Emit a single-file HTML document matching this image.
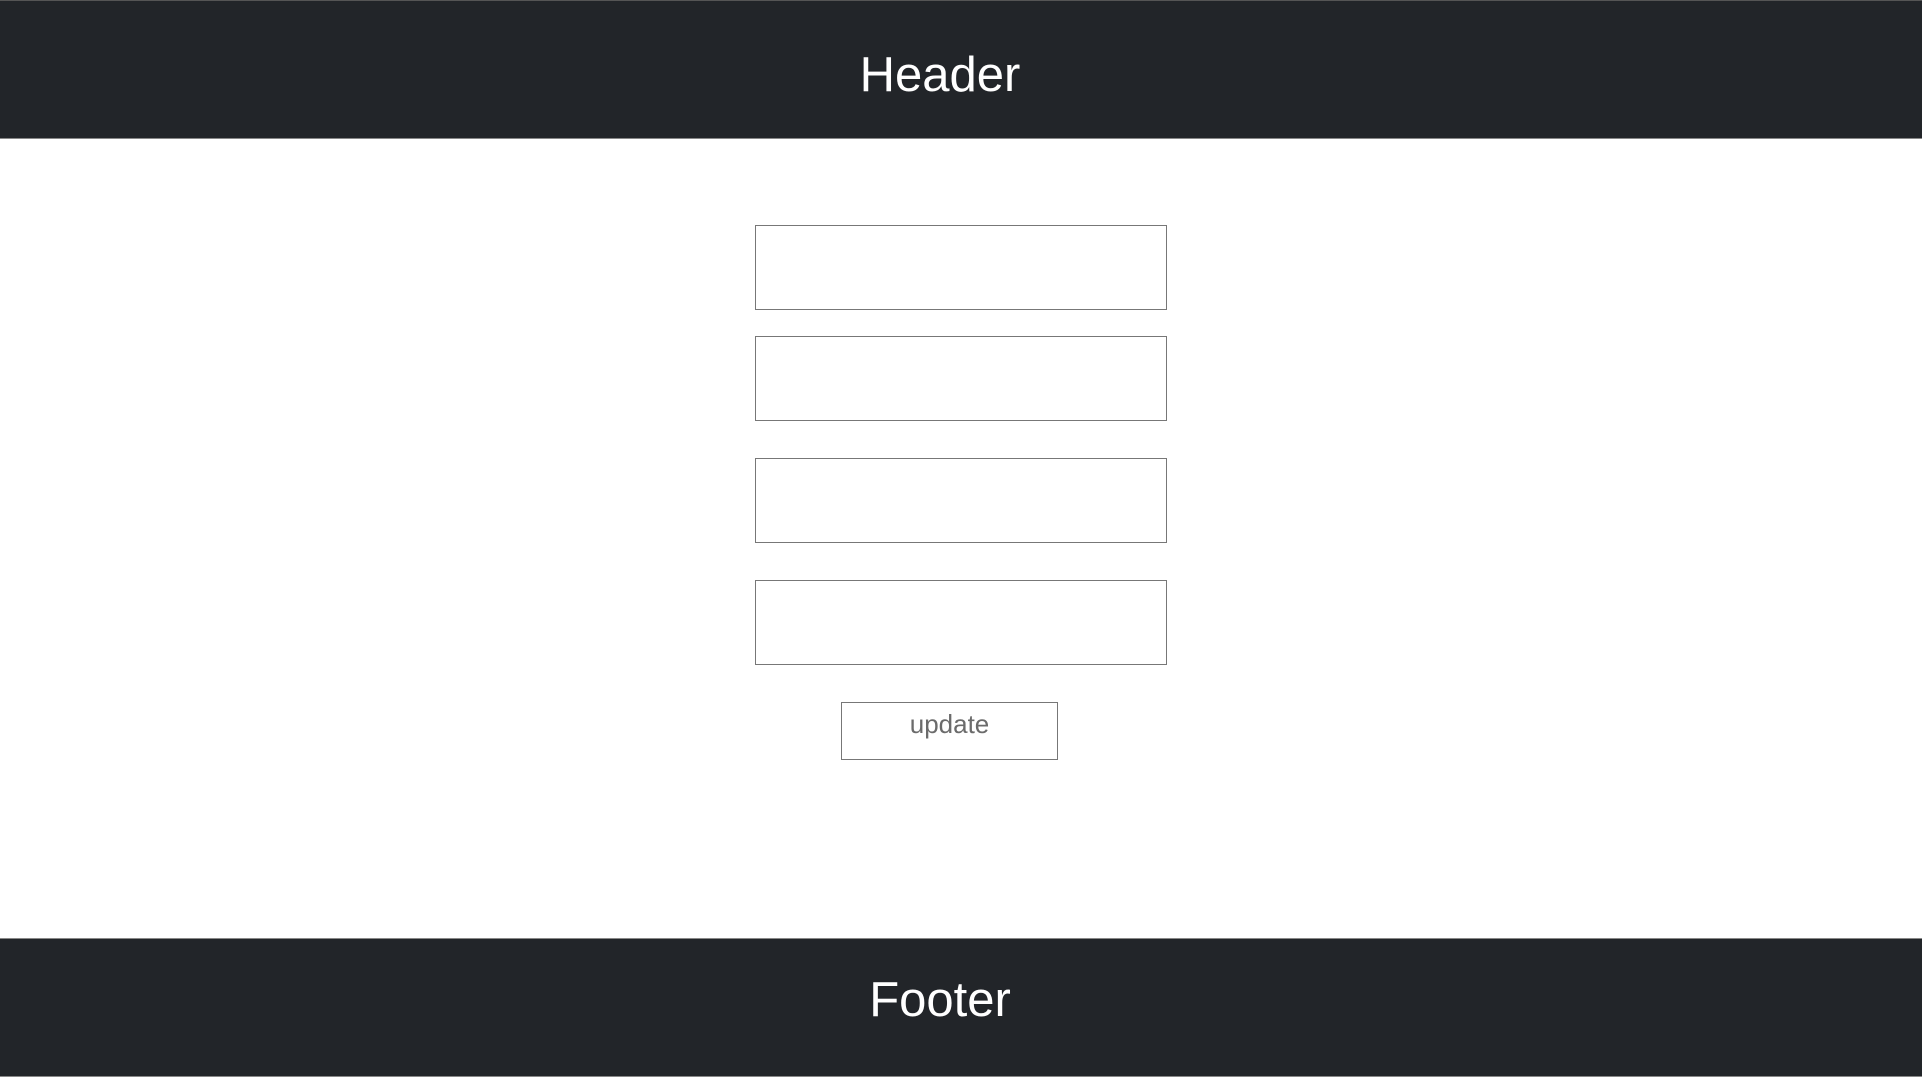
<!DOCTYPE html>
<html><head><meta charset="utf-8"><style>
html,body{margin:0;padding:0;width:1922px;height:1077px;background:#fff;overflow:hidden;position:relative;font-family:"Liberation Sans",sans-serif}
.bar{position:absolute;left:0;width:1922px;background:#222529}
.t{position:absolute;left:0;width:1880px;text-align:center;color:#fff;font-size:49px;line-height:50px}
.box{position:absolute;left:755px;width:410px;height:83px;border:1px solid #777;box-sizing:content-box}
.btn{position:absolute;left:841px;top:702px;width:215px;height:56px;border:1px solid #777}
.u{position:absolute;left:841px;top:711px;width:217px;text-align:center;color:#6b6b6b;font-size:26px;line-height:26px}
</style></head><body>
<div class="bar" style="top:0;border-top:1px solid #555;border-bottom:1px solid #888;box-sizing:border-box;height:139px"></div>
<div class="t" style="top:50px">Header</div>
<div class="box" style="top:225px"></div>
<div class="box" style="top:336px"></div>
<div class="box" style="top:458px"></div>
<div class="box" style="top:580px"></div>
<div class="btn"></div>
<div class="u">update</div>
<div class="bar" style="top:938px;height:139px;border-top:1px solid #888;border-bottom:1px solid #888;box-sizing:border-box"></div>
<div class="t" style="top:975px">Footer</div>
</body></html>
